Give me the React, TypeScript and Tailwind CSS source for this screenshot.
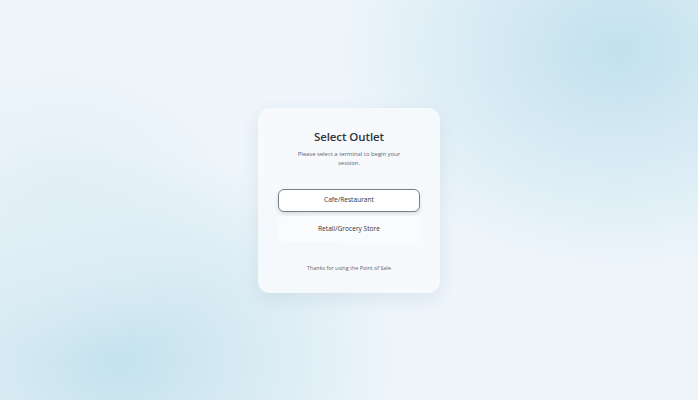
import React from "react";

const outlets = ["Cafe/Restaurant", "Retail/Grocery Store"];

export default function App() {
  return (
    <div
      className="relative flex h-[400px] w-full items-center justify-center overflow-hidden bg-[#eef5fb]"
      style={{ fontFamily: '"Open Sans", "Noto Sans", sans-serif' }}
    >
      {/* soft background blobs */}
      <div className="pointer-events-none absolute -right-[200px] -top-[170px] h-[440px] w-[560px] rounded-full bg-[radial-gradient(closest-side,#c2e1ed,rgba(238,245,251,0))]" />
      <div className="pointer-events-none absolute -bottom-[170px] -left-[160px] h-[420px] w-[560px] rounded-full bg-[radial-gradient(closest-side,#c4e2ed,rgba(238,245,251,0))]" />
      <div className="pointer-events-none absolute left-[-120px] top-[60px] h-[300px] w-[360px] rounded-full bg-[radial-gradient(closest-side,#e0eef6,rgba(238,245,251,0))]" />

      <div className="relative flex h-[185px] w-[182px] flex-col items-center rounded-[12px] bg-[#f7fafc]/90 px-5 pt-[21px] shadow-[0_6px_18px_rgba(120,150,175,0.16)]">
        <h1 className="text-[11.5px] leading-[16px] font-semibold tracking-[-0.1px] text-[#30353b]">
          Select Outlet
        </h1>
        <p className="mt-[5px] text-center text-[5.9px] leading-[9px] text-[#5b6470]">
          Please select a terminal to begin your
          <br />
          session.
        </p>

        <div className="mt-[21px] flex w-full flex-col gap-[4px]">
          {outlets.map((name, i) => (
            <button
              key={name}
              className={
                i === 0
                  ? "h-[23px] w-full rounded-[6px] border border-[#7a7f86] bg-white text-[6.6px] text-[#2f343a] shadow-[0_2px_4px_rgba(0,0,0,0.12)]"
                  : "h-[26px] w-full rounded-[6px] bg-white/40 text-[6.6px] text-[#2f343a]"
              }
            >
              {name}
            </button>
          ))}
        </div>

        <p className="mt-[22px] text-[5.4px] leading-[8px] text-[#5b6470]">
          Thanks for using the Point of Sale
        </p>
      </div>
    </div>
  );
}
